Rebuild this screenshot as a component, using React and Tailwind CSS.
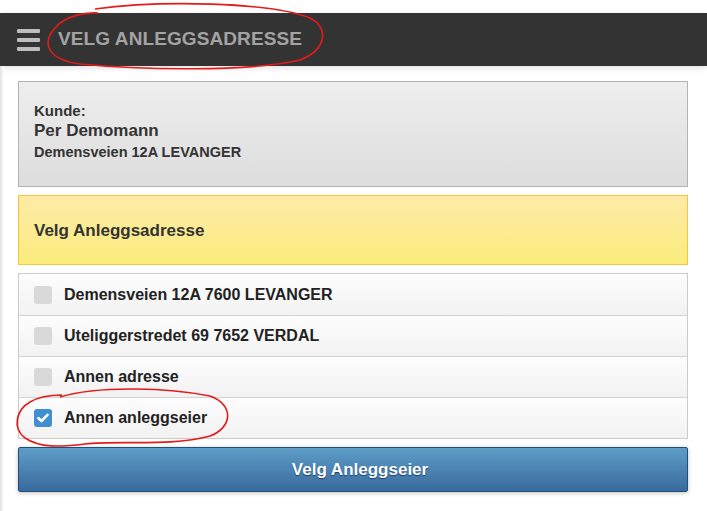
import React from "react";

const ADDRESSES = [
  { label: "Demensveien 12A 7600 LEVANGER", checked: false },
  { label: "Uteliggerstredet 69 7652 VERDAL", checked: false },
  { label: "Annen adresse", checked: false },
  { label: "Annen anleggseier", checked: true },
];

const Checkbox = ({ checked }) =>
  checked ? (
    <span className="flex h-[18px] w-[18px] items-center justify-center rounded-[3px] bg-[#3f8fd2]">
      <svg width="12" height="10" viewBox="0 0 12 10">
        <path d="M1.5 5.2 L4.5 8 L10.5 1.8" fill="none" stroke="#fff" strokeWidth="2.6" strokeLinecap="round" strokeLinejoin="round" />
      </svg>
    </span>
  ) : (
    <span className="h-[18px] w-[18px] rounded-[3px] bg-[#d9d9d9]" />
  );

export default function App() {
  return (
    <div className="relative h-[511px] w-[707px] overflow-hidden bg-white font-['Liberation_Sans',Arial,sans-serif]">
      <div className="h-[13px] bg-white" />
      {/* header */}
      <div className="flex h-[53px] items-center bg-[#333333] pl-[17px] shadow-[0_2px_6px_rgba(0,0,0,0.12)]">
        <div className="flex w-[23px] flex-col gap-[5px]">
          <span className="h-[4px] rounded-[1px] bg-[#bdbdbd]" />
          <span className="h-[4px] rounded-[1px] bg-[#bdbdbd]" />
          <span className="h-[4px] rounded-[1px] bg-[#bdbdbd]" />
        </div>
        <h1 className="ml-[18px] text-[19px] font-bold tracking-[0.1px] text-[#a3a3a3]">
          VELG ANLEGGSADRESSE
        </h1>
      </div>

      <div className="flex h-[445px]">
        <div className="w-[4px] bg-gradient-to-r from-[#e2e2e2] to-white" />
        <div className="flex w-[684px] flex-col pl-[14px] pt-[15px]">
          {/* customer */}
          <div className="flex h-[106px] flex-col justify-center border border-[#b3b3b3] bg-gradient-to-b from-[#eeeeee] to-[#dddddd] pb-[4px] pl-[15px] text-[#333]">
            <div className="text-[15px] font-bold leading-[18px]">Kunde:</div>
            <div className="text-[17px] font-bold leading-[22px]">Per Demomann</div>
            <div className="text-[14.5px] font-bold leading-[20px]">Demensveien 12A LEVANGER</div>
          </div>

          {/* heading */}
          <div className="mt-[8px] flex h-[70px] items-center border border-[#f4c63f] bg-gradient-to-b from-[#fdeaa7] to-[#fbec7b] pl-[15px] pt-[1px]">
            <span className="text-[17px] font-bold text-[#333]">Velg Anleggsadresse</span>
          </div>

          {/* list */}
          <div className="mt-[8px] flex flex-col border border-[#cccccc]">
            {ADDRESSES.map((a, i) => (
              <label
                key={a.label}
                className={`flex h-[41px] items-center gap-[12px] bg-gradient-to-b from-[#fdfdfd] to-[#f2f2f2] pl-[15px] ${
                  i > 0 ? "border-t border-[#d4d4d4]" : ""
                }`}
              >
                <Checkbox checked={a.checked} />
                <span className="text-[16px] font-bold text-[#222]">{a.label}</span>
              </label>
            ))}
          </div>

          {/* button */}
          <button className="mt-[8px] flex h-[45px] items-center justify-center rounded-[2px] border border-[#1f4f78] bg-gradient-to-b from-[#5e9dc8] to-[#396a9d] pl-[14px] shadow-[0_1px_4px_rgba(0,0,0,0.25)]">
            <span className="text-[17px] font-bold text-white [text-shadow:0_1px_1px_#1e3f60]">
              Velg Anleggseier
            </span>
          </button>
        </div>
      </div>

      {/* red annotation marks */}
      <svg className="pointer-events-none absolute left-0 top-0" width="707" height="511">
        <path
          d="M 95 9 C 160 0, 270 2, 310 18 C 330 28, 326 50, 300 60 C 250 72, 140 70, 80 64 C 50 60, 40 45, 55 28 C 65 16, 85 12, 98 13"
          fill="none"
          stroke="#e31b1b"
          strokeWidth="1.6"
        />
        <path
          d="M 60 397 C 100 385, 170 388, 210 396 C 235 405, 232 428, 210 436 C 170 447, 120 440, 85 444 C 60 447, 40 448, 25 438 C 12 428, 16 410, 30 402 C 40 396, 50 395, 62 395"
          fill="none"
          stroke="#e31b1b"
          strokeWidth="1.6"
        />
      </svg>
    </div>
  );
}
